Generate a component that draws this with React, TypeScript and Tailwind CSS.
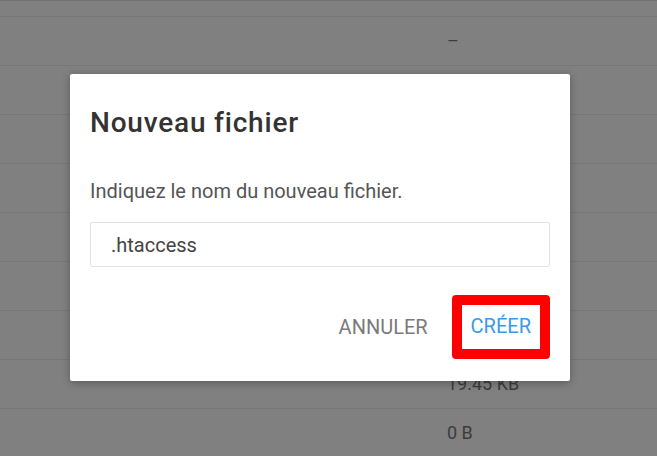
import React from "react"

const rows = [
  { size: "" },
  { size: "–" },
  { size: "" },
  { size: "" },
  { size: "" },
  { size: "" },
  { size: "" },
  { size: "" },
  { size: "19.45 KB" },
  { size: "0 B" },
]

export default function App() {
  return (
    <div
      className="relative h-[456px] w-[657px] overflow-hidden bg-[#808080]"
      style={{ fontFamily: "Roboto, 'Liberation Sans', sans-serif" }}
    >
      {/* file list behind the overlay */}
      <div className="border-t border-[#737373]">
        {rows.map((row, i) => (
          <div
            key={i}
            className={`flex items-center border-b border-[#777777] ${i === 0 ? "h-[16px]" : "h-[49px]"}`}
          >
            <div className="w-[447px]" />
            <span className="text-[18px] leading-[24px] text-[#3c3c3c]">{row.size}</span>
          </div>
        ))}
      </div>

      {/* dialog */}
      <div className="absolute left-[70px] top-[74px] w-[500px] rounded-[2px] bg-white shadow-[0_2px_8px_rgba(0,0,0,0.3)]">
        <div className="px-5 pt-[31px]">
          <h2 className="text-[28px] font-medium leading-[36px] tracking-[0.8px] text-[#333333]">Nouveau fichier</h2>
          <p className="mt-[38px] text-[20px] leading-[24px] text-[#555555]">
            Indiquez le nom du nouveau fichier.
          </p>
          <div className="mt-[19px] flex h-[45px] items-center rounded-[2px] border border-[#e3e3e3] pl-[20px] text-[20px] text-[#444444]">
            .htaccess
          </div>
        </div>
        <div className="flex items-center justify-end gap-[24px] px-5 pb-[22px] pt-[28px]">
          <button className="text-[20px] leading-[25px] text-[#7a7a7a]">ANNULER</button>
          <div className="rounded-[4px] border-[10px] border-[#ff0000] px-[9px] py-[9px]">
            <button className="text-[20px] leading-[25px] text-[#3b9ae8]">CRÉER</button>
          </div>
        </div>
      </div>
    </div>
  )
}
